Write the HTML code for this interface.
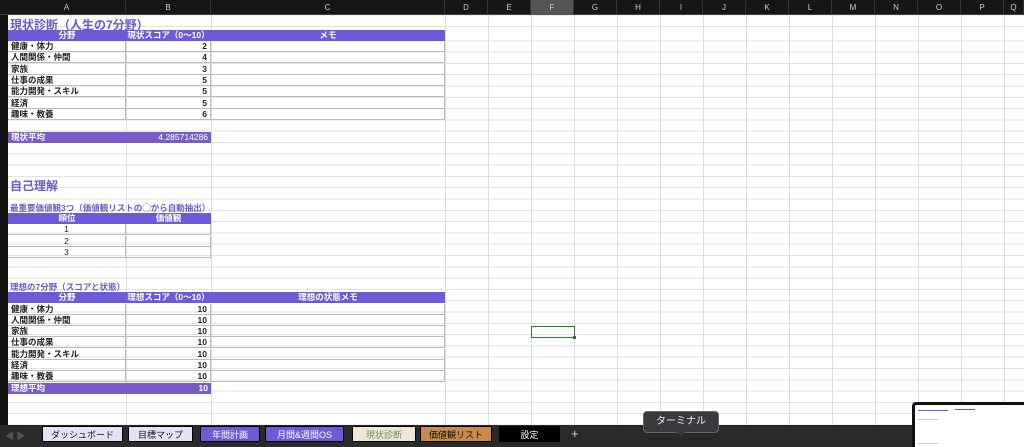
<!DOCTYPE html>
<html><head><meta charset="utf-8"><style>
*{margin:0;padding:0;box-sizing:border-box}
body{width:1024px;height:447px;overflow:hidden;background:#fff;font-family:"Liberation Sans","Noto Sans CJK JP",sans-serif;position:relative}
.a{position:absolute}
.grid{left:8px;top:15px;width:1016px;height:410px;
background-image:repeating-linear-gradient(to bottom,transparent 0,transparent 10.3px,#e2e2e2 10.3px,#e2e2e2 11.3px);background-position:0 15px}
.v{position:absolute;top:15px;height:410px;width:1px;background:#dedede}
.hdr{left:0;top:0;width:1024px;height:15px;background:#161616;border-bottom:1px solid #444}
.hl{position:absolute;top:0;height:15px;line-height:15px;font-size:8px;color:#ccc;text-align:center;border-right:1px solid #333}
.rh{left:0;top:15px;width:8px;height:410px;background:#111}
.c{position:absolute;height:11px;line-height:11px;font-size:8.5px;font-weight:bold;color:#222;white-space:nowrap;padding:0 3px}
.ph{background:#6b5bd8;color:#fff;text-align:center}
.pa{background:#7a5cc8;color:#fff}
.bx{border-bottom:1px solid #bbb;border-right:1px solid #bbb}
.t{position:absolute;font-weight:bold;color:#6a5acd;white-space:nowrap}
.tab{position:absolute;top:426px;height:16px;line-height:16px;font-size:9px;text-align:center;border:1px solid #000}
</style></head><body>
<div class="a grid"></div>
<div class="v" style="left:126px"></div><div class="v" style="left:211px"></div><div class="v" style="left:445px"></div>
<div class="v" style="left:488px"></div><div class="v" style="left:531px"></div><div class="v" style="left:574px"></div>
<div class="v" style="left:617px"></div><div class="v" style="left:660px"></div><div class="v" style="left:703px"></div>
<div class="v" style="left:746px"></div><div class="v" style="left:789px"></div><div class="v" style="left:832px"></div>
<div class="v" style="left:875px"></div><div class="v" style="left:918px"></div><div class="v" style="left:961px"></div><div class="v" style="left:1004px"></div>
<div class="a hdr">
<div class="hl" style="left:8px;width:118px">A</div><div class="hl" style="left:126px;width:85px">B</div><div class="hl" style="left:211px;width:234px">C</div>
<div class="hl" style="left:445px;width:43px">D</div><div class="hl" style="left:488px;width:43px">E</div><div class="hl" style="left:531px;width:43px;background:#555">F</div>
<div class="hl" style="left:574px;width:43px">G</div><div class="hl" style="left:617px;width:43px">H</div><div class="hl" style="left:660px;width:43px">I</div>
<div class="hl" style="left:703px;width:43px">J</div><div class="hl" style="left:746px;width:43px">K</div><div class="hl" style="left:789px;width:43px">L</div>
<div class="hl" style="left:832px;width:43px">M</div><div class="hl" style="left:875px;width:43px">N</div><div class="hl" style="left:918px;width:43px">O</div>
<div class="hl" style="left:961px;width:43px">P</div><div class="hl" style="left:1004px;width:20px">Q</div>
</div>
<div class="a rh"></div>

<div class="t" style="left:10px;top:16px;font-size:12px">現状診断（人生の7分野）</div>
<div class="c ph" style="left:8px;top:30px;width:437px;padding:0"><span class="a" style="left:0;width:118px">分野</span><span class="a" style="left:118px;width:85px">現状スコア（0〜10）</span><span class="a" style="left:203px;width:234px">メモ</span></div>
<div class="a" style="left:8px;top:41px;width:437px;height:79px">
<div class="c bx" style="left:0;top:0;width:118px">健康・体力</div><div class="c bx" style="left:118px;top:0;width:85px;text-align:right">2</div><div class="c bx" style="left:203px;top:0;width:234px"></div>
<div class="c bx" style="left:0;top:11.3px;width:118px">人間関係・仲間</div><div class="c bx" style="left:118px;top:11.3px;width:85px;text-align:right">4</div><div class="c bx" style="left:203px;top:11.3px;width:234px"></div>
<div class="c bx" style="left:0;top:22.6px;width:118px">家族</div><div class="c bx" style="left:118px;top:22.6px;width:85px;text-align:right">3</div><div class="c bx" style="left:203px;top:22.6px;width:234px"></div>
<div class="c bx" style="left:0;top:33.9px;width:118px">仕事の成果</div><div class="c bx" style="left:118px;top:33.9px;width:85px;text-align:right">5</div><div class="c bx" style="left:203px;top:33.9px;width:234px"></div>
<div class="c bx" style="left:0;top:45.2px;width:118px">能力開発・スキル</div><div class="c bx" style="left:118px;top:45.2px;width:85px;text-align:right">5</div><div class="c bx" style="left:203px;top:45.2px;width:234px"></div>
<div class="c bx" style="left:0;top:56.5px;width:118px">経済</div><div class="c bx" style="left:118px;top:56.5px;width:85px;text-align:right">5</div><div class="c bx" style="left:203px;top:56.5px;width:234px"></div>
<div class="c bx" style="left:0;top:67.8px;width:118px">趣味・教養</div><div class="c bx" style="left:118px;top:67.8px;width:85px;text-align:right">6</div><div class="c bx" style="left:203px;top:67.8px;width:234px"></div>
</div>
<div class="c pa" style="left:8px;top:132px;width:203px">現状平均<span style="float:right;font-weight:normal">4.285714286</span></div>

<div class="t" style="left:10px;top:177px;font-size:12px">自己理解</div>
<div class="t" style="left:10px;top:202px;font-size:8.5px">最重要価値観3つ（価値観リストの◯から自動抽出）</div>
<div class="c ph" style="left:8px;top:213px;width:203px;padding:0"><span class="a" style="left:0;width:118px">順位</span><span class="a" style="left:118px;width:85px">価値観</span></div>
<div class="c bx" style="left:8px;top:224px;width:118px;text-align:center;font-weight:normal">1</div><div class="c bx" style="left:126px;top:224px;width:85px"></div>
<div class="c bx" style="left:8px;top:235.5px;width:118px;text-align:center;font-weight:normal">2</div><div class="c bx" style="left:126px;top:235.5px;width:85px"></div>
<div class="c bx" style="left:8px;top:247px;width:118px;text-align:center;font-weight:normal">3</div><div class="c bx" style="left:126px;top:247px;width:85px"></div>

<div class="t" style="left:10px;top:281px;font-size:8.5px">理想の7分野（スコアと状態）</div>
<div class="c ph" style="left:8px;top:292px;width:437px;padding:0"><span class="a" style="left:0;width:118px">分野</span><span class="a" style="left:118px;width:85px">理想スコア（0〜10）</span><span class="a" style="left:203px;width:234px">理想の状態メモ</span></div>
<div class="a" style="left:8px;top:303.5px;width:437px;height:79px">
<div class="c bx" style="left:0;top:0;width:118px">健康・体力</div><div class="c bx" style="left:118px;top:0;width:85px;text-align:right">10</div><div class="c bx" style="left:203px;top:0;width:234px"></div>
<div class="c bx" style="left:0;top:11.3px;width:118px">人間関係・仲間</div><div class="c bx" style="left:118px;top:11.3px;width:85px;text-align:right">10</div><div class="c bx" style="left:203px;top:11.3px;width:234px"></div>
<div class="c bx" style="left:0;top:22.6px;width:118px">家族</div><div class="c bx" style="left:118px;top:22.6px;width:85px;text-align:right">10</div><div class="c bx" style="left:203px;top:22.6px;width:234px"></div>
<div class="c bx" style="left:0;top:33.9px;width:118px">仕事の成果</div><div class="c bx" style="left:118px;top:33.9px;width:85px;text-align:right">10</div><div class="c bx" style="left:203px;top:33.9px;width:234px"></div>
<div class="c bx" style="left:0;top:45.2px;width:118px">能力開発・スキル</div><div class="c bx" style="left:118px;top:45.2px;width:85px;text-align:right">10</div><div class="c bx" style="left:203px;top:45.2px;width:234px"></div>
<div class="c bx" style="left:0;top:56.5px;width:118px">経済</div><div class="c bx" style="left:118px;top:56.5px;width:85px;text-align:right">10</div><div class="c bx" style="left:203px;top:56.5px;width:234px"></div>
<div class="c bx" style="left:0;top:67.8px;width:118px">趣味・教養</div><div class="c bx" style="left:118px;top:67.8px;width:85px;text-align:right">10</div><div class="c bx" style="left:203px;top:67.8px;width:234px"></div>
</div>
<div class="c pa" style="left:8px;top:383px;width:203px">理想平均<span style="float:right">10</span></div>

<div class="a" style="left:531px;top:326px;width:44px;height:12px;border:1px solid #2e7d32"></div>
<div class="a" style="left:573px;top:336px;width:3px;height:3px;background:#2e7d32"></div>

<div class="a" style="left:0;top:425px;width:1024px;height:22px;background:#2a2a2a"></div>
<div class="a" style="left:5px;top:429px;font-size:9px;color:#555">◀ ▶</div>
<div class="tab" style="left:42px;width:81px;background:#e6e1f7;color:#111">ダッシュボード</div>
<div class="tab" style="left:128px;width:65px;background:#e6e1f7;color:#111">目標マップ</div>
<div class="tab" style="left:200px;width:60px;background:#6b5bd8;color:#fff">年間計画</div>
<div class="tab" style="left:265px;width:79px;background:#6b5bd8;color:#fff">月間&amp;週間OS</div>
<div class="tab" style="left:352px;width:64px;background:#efe6d6;color:#6f8f5f">現状診断</div>
<div class="tab" style="left:420px;width:72px;background:#c98a4c;color:#111">価値観リスト</div>
<div class="tab" style="left:499px;width:61px;background:#000;color:#fff">設定</div>
<div class="a" style="left:571px;top:426px;font-size:13px;color:#ccc">+</div>
<div class="a" style="left:643px;top:411px;width:76px;height:22px;background:#3a3a3e;border:1px solid #666;border-radius:4px;color:#eee;font-size:10px;line-height:20px;text-align:center">ターミナル</div>
<div class="a" style="left:677px;top:432px;width:0;height:0;border-left:4px solid transparent;border-right:4px solid transparent;border-top:5px solid #3a3a3e"></div>
<div class="a" style="left:912px;top:402px;width:112px;height:45px;background:#fff;border:3px solid #111;border-right:none;border-bottom:none;border-radius:4px 0 0 0">
<div class="a" style="left:3px;top:5px;width:30px;height:1px;background:#6b5bd8"></div>
<div class="a" style="left:40px;top:4px;width:20px;height:1px;background:#6b5bd8"></div>
<div class="a" style="left:3px;top:14px;width:20px;height:25px;border-top:1px solid #ccc;border-bottom:1px solid #ccc"></div>
</div>
</body></html>
